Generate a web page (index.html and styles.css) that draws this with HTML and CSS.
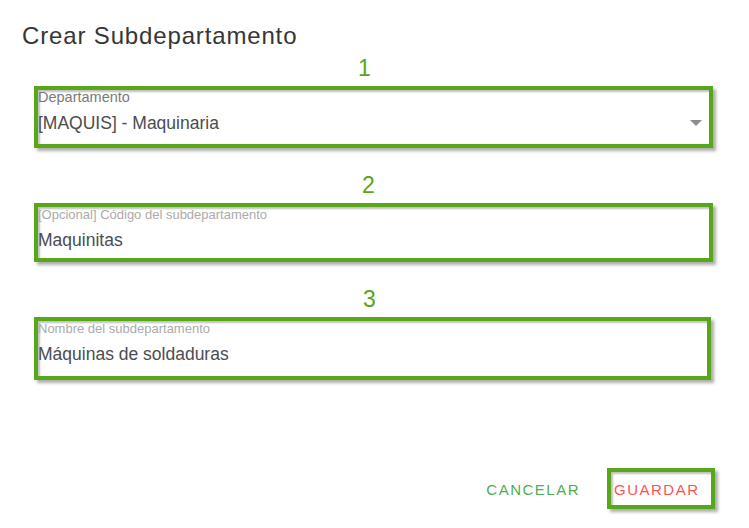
FILE: index.html
```html
<!DOCTYPE html>
<html lang="es">
<head>
<meta charset="utf-8">
<title>Crear Subdepartamento</title>
<link rel="stylesheet" href="styles.css">
</head>
<body>
<div class="dialog">
  <h1 class="title">Crear Subdepartamento</h1>

  <div class="field field-first">
    <div class="step step-1">1</div>
    <div class="box box-1">
      <div class="label label-dark">Departamento</div>
      <div class="value-row">
        <span class="value">[MAQUIS] - Maquinaria</span>
        <svg class="caret" width="12" height="6" viewBox="0 0 12 6"><path d="M0 0H12L6 6Z" fill="#8c8c8c"/></svg>
      </div>
    </div>
  </div>

  <div class="field">
    <div class="step step-2">2</div>
    <div class="box box-2">
      <div class="label">[Opcional] Código del subdepartamento</div>
      <div class="value-row"><span class="value">Maquinitas</span></div>
    </div>
  </div>

  <div class="field">
    <div class="step step-3">3</div>
    <div class="box box-3">
      <div class="label">Nombre del subdepartamento</div>
      <div class="value-row"><span class="value">Máquinas de soldaduras</span></div>
    </div>
  </div>

  <div class="actions">
    <button class="btn btn-cancel">CANCELAR</button>
    <button class="btn btn-save">GUARDAR</button>
  </div>
</div>
</body>
</html>
```

FILE: styles.css
```css
html, body {
  margin: 0;
  padding: 0;
  background: #ffffff;
}

body {
  font-family: "Liberation Sans", Arial, sans-serif;
  color: #444;
}

.dialog {
  width: 749px;
  height: 528px;
  box-sizing: border-box;
  padding-top: 22px;
}

.title {
  margin: 0 0 0 22px;
  font-size: 24px;
  line-height: 28px;
  font-weight: normal;
  letter-spacing: 0.85px;
  color: #363636;
}

.field {
  margin-top: 25px;
  display: flex;
  flex-direction: column;
}

.field-first {
  margin-top: 6px;
}

.step {
  height: 24px;
  margin-bottom: 6px;
  font-size: 23px;
  line-height: 24px;
  color: #56a51b;
  padding-left: 358px;
}

.step-2 {
  padding-left: 362px;
}

.step-3 {
  padding-left: 363px;
}

.box {
  margin-left: 34px;
  width: 679px;
  box-sizing: border-box;
  border: 4px solid #58a619;
  box-shadow: 3px 3px 3px rgba(0, 0, 0, 0.32), inset 2px 2px 2px rgba(0, 0, 0, 0.25);
  background: #fff;
  padding: 0;
}

.box-1 {
  height: 62px;
}

.box-2 {
  height: 59px;
}

.box-3 {
  height: 63px;
  width: 677px;
}

.label {
  font-size: 13px;
  line-height: 15px;
  color: #ababab;
  white-space: nowrap;
}

.label-dark {
  font-size: 14.5px;
  color: #7a7a7a;
}

.value-row {
  margin-top: 8px;
  display: flex;
  align-items: center;
  justify-content: space-between;
  height: 20px;
}

.value {
  font-size: 17.5px;
  line-height: 20px;
  color: #4a4d50;
  white-space: nowrap;
}

.caret {
  margin-right: 7px;
  margin-top: -1px;
}

.actions {
  margin-top: 88px;
  margin-right: 34px;
  display: flex;
  justify-content: flex-end;
  align-items: baseline;
}

.btn {
  font-family: "Liberation Sans", Arial, sans-serif;
  font-size: 15px;
  line-height: 20px;
  letter-spacing: 1.5px;
  background: #fff;
  border: 0;
  margin: 0;
  cursor: pointer;
}

.btn-cancel {
  color: #4caf50;
  padding: 0;
  margin-right: 27px;
}

.btn-save {
  color: #ff5252;
  border: 4px solid #58a619;
  box-shadow: 3px 3px 3px rgba(0, 0, 0, 0.32), inset 2px 2px 2px rgba(0, 0, 0, 0.25);
  padding: 8px 10px 5px 3px;
  width: 108px;
  height: 41px;
  box-sizing: border-box;
  text-align: left;
}
```
